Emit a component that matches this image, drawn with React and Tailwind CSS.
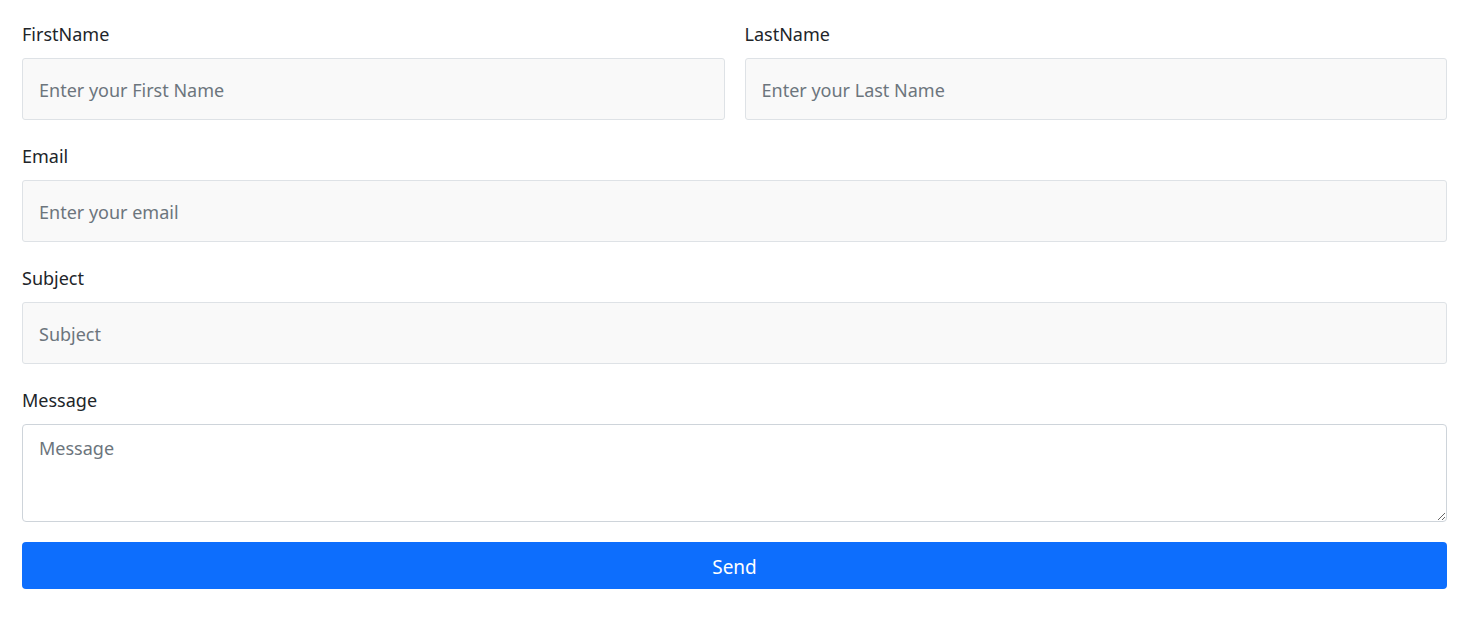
const inputCls = "w-full h-[62px] px-4 pt-[2px] bg-[#f9f9f9] border border-[#dee2e6] rounded-[3px] text-[18px] text-[#212529] placeholder:text-[#6c757d] outline-none";

const Field = ({ label, children, className = "" }) => (
    <div className={`flex flex-col ${className}`}>
        <label className="text-[18px] leading-6 text-[#212529] mb-3">{label}</label>
        {children}
    </div>
);

export default function App() {
    return (
        <div className="min-h-screen bg-white" style={{ fontFamily: '"Noto Sans", "Open Sans", sans-serif' }}>
            <form className="pl-[22px] pr-[26px] pt-[22px] flex flex-col gap-6" onSubmit={(e) => e.preventDefault()}>
                <div className="grid grid-cols-2 gap-5">
                    <Field label="FirstName">
                        <input className={inputCls} placeholder="Enter your First Name" />
                    </Field>
                    <Field label="LastName">
                        <input className={inputCls} placeholder="Enter your Last Name" />
                    </Field>
                </div>
                <Field label="Email">
                    <input className={inputCls} placeholder="Enter your email" />
                </Field>
                <Field label="Subject">
                    <input className={inputCls} placeholder="Subject" />
                </Field>
                <Field label="Message">
                    <textarea
                        className="w-full h-[98px] px-4 pt-[10px] bg-white border border-[#ced4da] rounded-[4px] text-[18px] text-[#212529] placeholder:text-[#6c757d] outline-none block"
                        placeholder="Message"
                    />
                </Field>
                <button
                    type="submit"
                    className="-mt-1 w-full h-[47px] pt-[4px] bg-[#0d6efd] text-white text-[19px] rounded-[4px]"
                >
                    Send
                </button>
            </form>
        </div>
    );
}
